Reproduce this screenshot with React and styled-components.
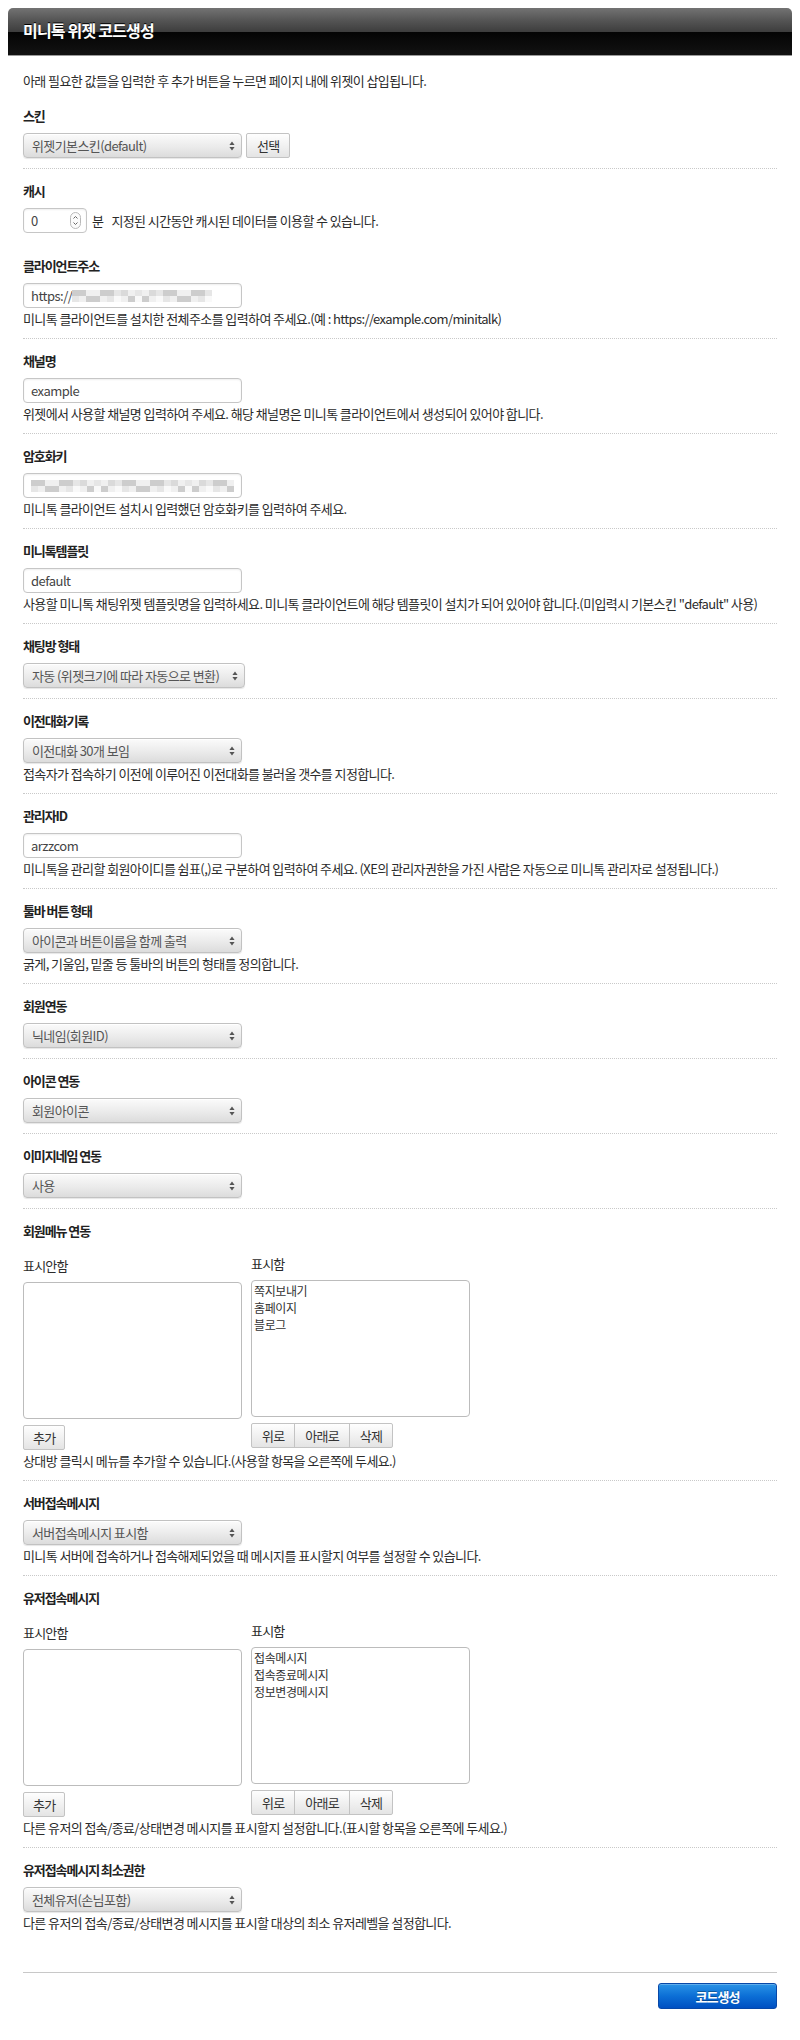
import React from 'react';
import styled, { createGlobalStyle } from 'styled-components';

const GlobalStyle = createGlobalStyle`
  html, body { margin: 0; padding: 0; background: #fff; }
  body {
    font-family: "Noto Sans CJK KR", "Noto Sans", sans-serif;
    color: #2b2b2b;
    -webkit-font-smoothing: antialiased;
  }
`;

const Page = styled.div`
  padding: 8px 8px 24px;
`;

const Header = styled.div`
  height: 47px;
  border-radius: 5px 5px 0 0;
  border-bottom: 1px solid #9a9a9a;
  background: linear-gradient(to bottom, #737373 0%, #565656 25%, #3e3e3e 50%, #040404 50%, #121212 100%);
  display: flex;
  align-items: center;
  padding: 0 15px;
`;

const Title = styled.h1`
  margin: -3px 0 0;
  font-size: 16px;
  line-height: 20px;
  font-weight: 700;
  letter-spacing: -0.8px;
  color: #fff;
  text-shadow: 0 -1px 0 #000;
`;

const Content = styled.div`
  padding: 0 15px;
`;

const Intro = styled.p`
  margin: 16px 0 3px;
  font-size: 13px;
  line-height: 18px;
  letter-spacing: -0.6px;
  color: #2b2b2b;
`;

const Section = styled.section`
  border-top: ${(p) => (p.$noBorder ? '0' : '1px dotted #c9c9c9')};
  padding: ${(p) => (p.$noBorder ? '14px' : '13px')} 0 10px;
`;

const Label = styled.h3`
  margin: 0 0 8px;
  font-size: 13px;
  line-height: 18px;
  font-weight: 700;
  letter-spacing: -1.1px;
  color: #222;
`;

const Row = styled.div`
  display: flex;
  align-items: center;
  gap: 4px;
`;

const SelectBox = styled.div`
  box-sizing: border-box;
  width: ${(p) => p.$w || 219}px;
  height: 25px;
  display: flex;
  align-items: center;
  justify-content: space-between;
  padding: 0 6px 0 8px;
  border: 1px solid #c2c2c2;
  border-radius: 4px;
  background: linear-gradient(to bottom, #fbfbfb 0%, #ebebeb 55%, #dcdcdc 100%);
  box-shadow: inset 0 1px 0 #fff, 0 1px 1px rgba(0, 0, 0, 0.1);
  font-size: 13px;
  letter-spacing: -0.6px;
  color: #555;
  white-space: nowrap;
`;

const Field = styled.div`
  box-sizing: border-box;
  width: ${(p) => p.$w || 219}px;
  height: 25px;
  display: flex;
  align-items: center;
  justify-content: ${(p) => (p.$spread ? 'space-between' : 'flex-start')};
  padding: 0 ${(p) => (p.$spread ? '5px' : '7px')} 0 7px;
  border: 1px solid #c6c6c6;
  border-radius: 4px;
  background: #fff;
  box-shadow: inset 0 1px 2px rgba(0, 0, 0, 0.07);
  font-size: 13px;
  letter-spacing: -0.5px;
  color: #444;
  white-space: nowrap;
  overflow: hidden;
`;

const Help = styled.p`
  margin: 2px 0 0;
  font-size: 13px;
  line-height: 18px;
  letter-spacing: -0.6px;
  color: #2b2b2b;
  white-space: nowrap;
`;

const Inline = styled.span`
  font-size: 13px;
  letter-spacing: -0.6px;
  color: #2b2b2b;
  margin-left: ${(p) => p.$ml || 0}px;
  white-space: nowrap;
`;

const Button = styled.button`
  box-sizing: border-box;
  height: 25px;
  padding: 0 ${(p) => p.$px || 8}px;
  border: 1px solid #c3c3c3;
  border-radius: 2px;
  background: linear-gradient(to bottom, #fefefe 0%, #f1f1f1 50%, #e4e4e4 100%);
  font-family: "Noto Sans CJK KR", "Noto Sans", sans-serif;
  font-size: 13px;
  letter-spacing: -0.8px;
  color: #333;
  line-height: 1;
  cursor: pointer;
`;

const ButtonGroup = styled.div`
  display: flex;
  & > ${Button} {
    border-radius: 0;
    margin-left: -1px;
  }
  & > ${Button}:first-child {
    border-radius: 2px 0 0 2px;
    margin-left: 0;
  }
  & > ${Button}:last-child {
    border-radius: 0 2px 2px 0;
  }
`;

const DualList = styled.div`
  display: flex;
  align-items: flex-start;
  gap: 9px;
  margin-top: 15px;
`;

const ListCol = styled.div`
  width: 219px;
  display: flex;
  flex-direction: column;
  align-items: flex-start;
  margin-top: ${(p) => p.$offset || 0}px;
`;

const ColLabel = styled.div`
  font-size: 13px;
  line-height: 18px;
  letter-spacing: -0.8px;
  color: #2b2b2b;
  margin-bottom: 7px;
`;

const ListBox = styled.div`
  box-sizing: border-box;
  width: 219px;
  height: 137px;
  margin-bottom: 6px;
  padding: 1px 2px;
  border: 1px solid #bcbcbc;
  border-radius: 4px;
  background: #fff;
`;

const ListItem = styled.div`
  font-size: 12px;
  line-height: 17px;
  letter-spacing: -0.4px;
  color: #333;
`;

const Footer = styled.div`
  margin-top: 30px;
  border-top: 1px solid #c8c8c8;
  padding-top: 10px;
  display: flex;
  justify-content: flex-end;
`;

const SubmitButton = styled.button`
  box-sizing: border-box;
  width: 119px;
  height: 26px;
  border: 1px solid #0848a8;
  border-radius: 3px;
  background: linear-gradient(to bottom, #2a93e6 0%, #0c6fd6 50%, #0050c2 100%);
  box-shadow: inset 0 1px 0 rgba(255, 255, 255, 0.25);
  font-family: "Noto Sans CJK KR", "Noto Sans", sans-serif;
  font-size: 13px;
  font-weight: 700;
  letter-spacing: -1px;
  color: #fff;
  text-shadow: 0 -1px 0 rgba(0, 0, 0, 0.3);
  cursor: pointer;
`;

const SelectArrows = () => (
  <svg width="6" height="10" viewBox="0 0 6 10" aria-hidden="true">
    <path d="M3 0.5 L5.6 4 H0.4 Z M0.4 6 H5.6 L3 9.5 Z" fill="#555" />
  </svg>
);

const Spinner = () => (
  <svg width="11" height="17" viewBox="0 0 11 17" aria-hidden="true">
    <rect x="0.5" y="0.5" width="10" height="16" rx="5" fill="#fbfbfb" stroke="#b9b9b9" />
    <path d="M3.5 6.5 L5.5 4.5 L7.5 6.5 M3.5 10.5 L5.5 12.5 L7.5 10.5" fill="none" stroke="#666" strokeWidth="1" />
  </svg>
);

const Mosaic = ({ width, seed }) => {
  const cols = Math.ceil(width / 7);
  const rects = [];
  for (let r = 0; r < 2; r += 1) {
    for (let c = 0; c < cols; c += 1) {
      const v = (c * 37 + r * 71 + seed * 13 + c * c * 3) % 13;
      const shade = v < 2 ? 205 : v < 4 ? 218 : v < 7 ? 230 : v < 10 ? 240 : 249;
      rects.push(
        <rect key={`${r}-${c}`} x={c * 7} y={r * 6} width={7} height={6} fill={`rgb(${shade},${shade},${shade})`} />
      );
    }
  }
  return (
    <svg width={width} height="12" viewBox={`0 0 ${width} 12`} aria-hidden="true">
      {rects}
    </svg>
  );
};

const Select = ({ children, w }) => (
  <SelectBox $w={w}>
    <span>{children}</span>
    <SelectArrows />
  </SelectBox>
);

const DualSection = ({ title, items, help }) => (
  <Section>
    <Label>{title}</Label>
    <DualList>
      <ListCol $offset={2}>
        <ColLabel>표시안함</ColLabel>
        <ListBox />
        <Button $px={9}>추가</Button>
      </ListCol>
      <ListCol>
        <ColLabel>표시함</ColLabel>
        <ListBox>
          {items.map((it) => (
            <ListItem key={it}>{it}</ListItem>
          ))}
        </ListBox>
        <ButtonGroup>
          <Button $px={10}>위로</Button>
          <Button $px={10}>아래로</Button>
          <Button $px={10}>삭제</Button>
        </ButtonGroup>
      </ListCol>
    </DualList>
    <Help>{help}</Help>
  </Section>
);

export default function App() {
  return (
    <>
      <GlobalStyle />
      <Page>
        <Header>
          <Title>미니톡 위젯 코드생성</Title>
        </Header>
        <Content>
          <Intro>아래 필요한 값들을 입력한 후 추가 버튼을 누르면 페이지 내에 위젯이 삽입됩니다.</Intro>

          <Section $noBorder>
            <Label>스킨</Label>
            <Row>
              <Select>위젯기본스킨(default)</Select>
              <Button $px={10}>선택</Button>
            </Row>
          </Section>

          <Section>
            <Label>캐시</Label>
            <Row>
              <Field $w={64} $spread>
                <span>0</span>
                <Spinner />
              </Field>
              <Inline $ml={1}>분</Inline>
              <Inline $ml={4}>지정된 시간동안 캐시된 데이터를 이용할 수 있습니다.</Inline>
            </Row>
          </Section>

          <Section $noBorder>
            <Label>클라이언트주소</Label>
            <Field>
              <span>https://</span>
              <Mosaic width={140} seed={3} />
            </Field>
            <Help>미니톡 클라이언트를 설치한 전체주소를 입력하여 주세요.(예 : https://example.com/minitalk)</Help>
          </Section>

          <Section>
            <Label>채널명</Label>
            <Field>example</Field>
            <Help>위젯에서 사용할 채널명 입력하여 주세요. 해당 채널명은 미니톡 클라이언트에서 생성되어 있어야 합니다.</Help>
          </Section>

          <Section>
            <Label>암호화키</Label>
            <Field>
              <Mosaic width={203} seed={7} />
            </Field>
            <Help>미니톡 클라이언트 설치시 입력했던 암호화키를 입력하여 주세요.</Help>
          </Section>

          <Section>
            <Label>미니톡템플릿</Label>
            <Field>default</Field>
            <Help>
              사용할 미니톡 채팅위젯 템플릿명을 입력하세요. 미니톡 클라이언트에 해당 템플릿이 설치가 되어 있어야 합니다.(미입력시 기본스킨 "default" 사용)
            </Help>
          </Section>

          <Section>
            <Label>채팅방 형태</Label>
            <Select w={222}>자동 (위젯크기에 따라 자동으로 변환)</Select>
          </Section>

          <Section>
            <Label>이전대화기록</Label>
            <Select>이전대화 30개 보임</Select>
            <Help>접속자가 접속하기 이전에 이루어진 이전대화를 불러올 갯수를 지정합니다.</Help>
          </Section>

          <Section>
            <Label>관리자ID</Label>
            <Field>arzzcom</Field>
            <Help>미니톡을 관리할 회원아이디를 쉼표(,)로 구분하여 입력하여 주세요. (XE의 관리자권한을 가진 사람은 자동으로 미니톡 관리자로 설정됩니다.)</Help>
          </Section>

          <Section>
            <Label>툴바 버튼 형태</Label>
            <Select>아이콘과 버튼이름을 함께 출력</Select>
            <Help>굵게, 기울임, 밑줄 등 툴바의 버튼의 형태를 정의합니다.</Help>
          </Section>

          <Section>
            <Label>회원연동</Label>
            <Select>닉네임(회원ID)</Select>
          </Section>

          <Section>
            <Label>아이콘 연동</Label>
            <Select>회원아이콘</Select>
          </Section>

          <Section>
            <Label>이미지네임 연동</Label>
            <Select>사용</Select>
          </Section>

          <DualSection
            title="회원메뉴 연동"
            items={['쪽지보내기', '홈페이지', '블로그']}
            help="상대방 클릭시 메뉴를 추가할 수 있습니다.(사용할 항목을 오른쪽에 두세요.)"
          />

          <Section>
            <Label>서버접속메시지</Label>
            <Select>서버접속메시지 표시함</Select>
            <Help>미니톡 서버에 접속하거나 접속해제되었을 때 메시지를 표시할지 여부를 설정할 수 있습니다.</Help>
          </Section>

          <DualSection
            title="유저접속메시지"
            items={['접속메시지', '접속종료메시지', '정보변경메시지']}
            help="다른 유저의 접속/종료/상태변경 메시지를 표시할지 설정합니다.(표시할 항목을 오른쪽에 두세요.)"
          />

          <Section>
            <Label>유저접속메시지 최소권한</Label>
            <Select>전체유저(손님포함)</Select>
            <Help>다른 유저의 접속/종료/상태변경 메시지를 표시할 대상의 최소 유저레벨을 설정합니다.</Help>
          </Section>

          <Footer>
            <SubmitButton>코드생성</SubmitButton>
          </Footer>
        </Content>
      </Page>
    </>
  );
}
